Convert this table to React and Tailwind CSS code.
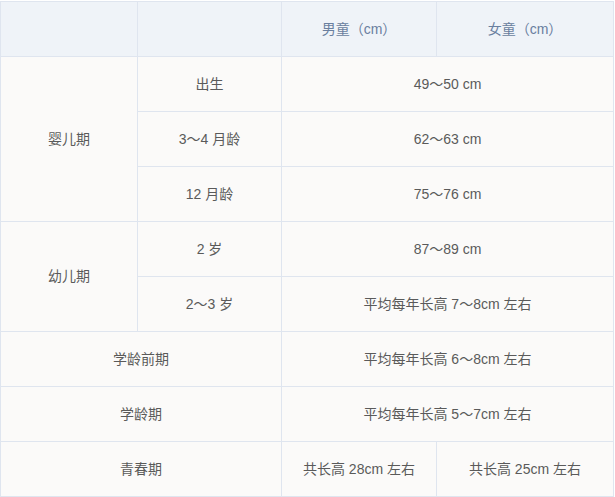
export default function App() {
  const td = 'border border-[#dfe5ef] text-center align-middle h-[55px] p-0';
  return (
    <div className="w-[615px] h-[497px] bg-white pt-px" style={{ fontFamily: '"Liberation Sans", "Noto Sans CJK SC", sans-serif' }}>
      <table className="w-[613px] table-fixed border-collapse text-[14px] text-[#5a5a5a] bg-[#fbfaf9]">
        <colgroup>
          <col className="w-[137px]" />
          <col className="w-[144px]" />
          <col className="w-[155px]" />
          <col className="w-[177px]" />
        </colgroup>
        <thead>
          <tr className="bg-[#eff3f8] text-[#6a7f9f]">
            <th className={`${td} font-normal`}></th>
            <th className={`${td} font-normal`}></th>
            <th className={`${td} font-normal`}>男童（cm）</th>
            <th className={`${td} font-normal`}>女童（cm）</th>
          </tr>
        </thead>
        <tbody>
          <tr>
            <td className={td} rowSpan={3}>婴儿期</td>
            <td className={td}>出生</td>
            <td className={td} colSpan={2}>49～50 cm</td>
          </tr>
          <tr>
            <td className={td}>3～4 月龄</td>
            <td className={td} colSpan={2}>62～63 cm</td>
          </tr>
          <tr>
            <td className={td}>12 月龄</td>
            <td className={td} colSpan={2}>75～76 cm</td>
          </tr>
          <tr>
            <td className={td} rowSpan={2}>幼儿期</td>
            <td className={td}>2 岁</td>
            <td className={td} colSpan={2}>87～89 cm</td>
          </tr>
          <tr>
            <td className={td}>2～3 岁</td>
            <td className={td} colSpan={2}>平均每年长高 7～8cm 左右</td>
          </tr>
          <tr>
            <td className={td} colSpan={2}>学龄前期</td>
            <td className={td} colSpan={2}>平均每年长高 6～8cm 左右</td>
          </tr>
          <tr>
            <td className={td} colSpan={2}>学龄期</td>
            <td className={td} colSpan={2}>平均每年长高 5～7cm 左右</td>
          </tr>
          <tr>
            <td className={td} colSpan={2}>青春期</td>
            <td className={td}>共长高 28cm 左右</td>
            <td className={td}>共长高 25cm 左右</td>
          </tr>
        </tbody>
      </table>
    </div>
  );
}
